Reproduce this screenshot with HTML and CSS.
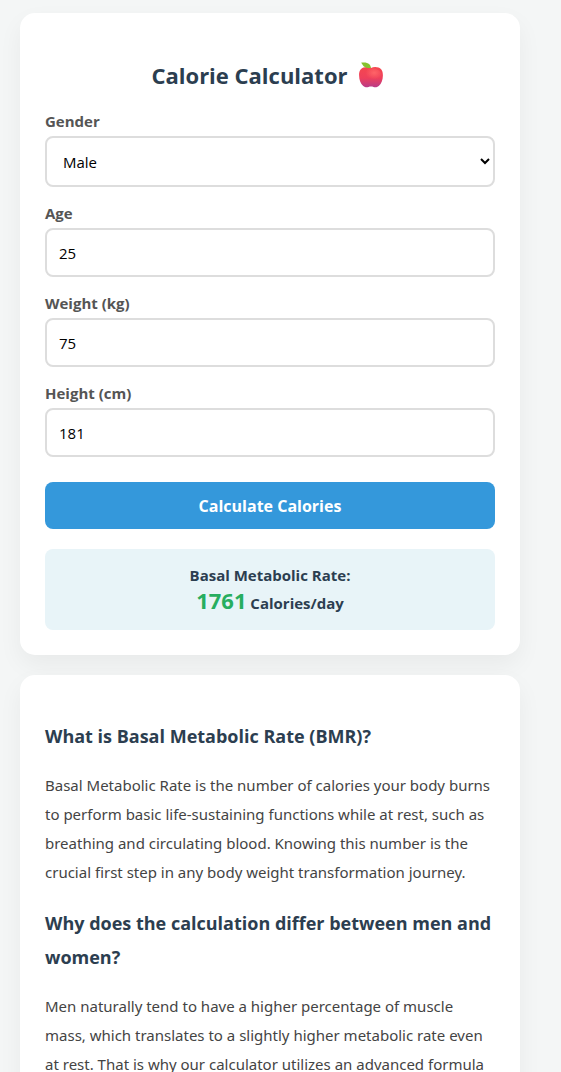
FILE: index.html
```html
<!DOCTYPE html>
<html lang="en">
<head>
    <meta charset="UTF-8">
    <meta name="viewport" content="width=device-width, initial-scale=1.0">
    <title>Calorie Calculator</title>
    <link rel="stylesheet" href="styles.css">
</head>
<body>
    <div class="card">
        <h2>
            Calorie Calculator
            <svg class="apple" viewBox="0 0 26 26" aria-hidden="true">
                <defs>
                    <linearGradient id="skin" x1="0" y1="0" x2="0" y2="1">
                        <stop offset="0" stop-color="#f5474f"/>
                        <stop offset="0.55" stop-color="#ee405c"/>
                        <stop offset="1" stop-color="#b83b88"/>
                    </linearGradient>
                    <radialGradient id="shine" cx="0.65" cy="0.3" r="0.4">
                        <stop offset="0" stop-color="#ff6468"/>
                        <stop offset="1" stop-color="#ff6468" stop-opacity="0"/>
                    </radialGradient>
                </defs>
                <path fill="url(#skin)" d="M13 6C15 5 18 4.700 20.500 5.600C23.800 6.700 25 9.800 24.900 13.500C24.800 18 23.500 21.800 20.800 24C19 25.400 16.800 25.400 15.500 24.900C13.800 24.400 12.200 24.400 10.500 24.900C9 25.400 7 25.400 5.200 24C2.500 21.800 1.200 18 1.100 13.500C1 9.800 2.200 6.700 5.500 5.600C8 4.700 11 5 13 6Z"/>
                <ellipse fill="url(#shine)" cx="13" cy="14" rx="11" ry="8"/>
                <path fill="#86c22e" d="M3 0.800C5.800 0.200 9.500 0.400 11.300 2.200C12.300 3.200 12.800 4.600 13 6C10.500 6.200 7.200 5.800 5.600 4.200C4.600 3.100 4.300 1.700 3 0.800Z"/>
            </svg>
        </h2>

        <label for="gender">Gender</label>
        <select id="gender">
            <option value="male" selected>Male</option>
            <option value="female">Female</option>
        </select>

        <label for="age">Age</label>
        <input type="number" id="age" value="25">

        <label for="weight">Weight (kg)</label>
        <input type="number" id="weight" value="75">

        <label for="height">Height (cm)</label>
        <input type="number" id="height" value="181">

        <button type="button" onclick="calculateBMR()">Calculate Calories</button>

        <div class="result">
            Basal Metabolic Rate:<br>
            <span class="calories" id="calories">1761</span> Calories/day
        </div>
    </div>

    <div class="card article">
        <h3>What is Basal Metabolic Rate (BMR)?</h3>
        <p>Basal Metabolic Rate is the number of calories your body burns to perform basic life-sustaining functions while at rest, such as breathing and circulating blood. Knowing this number is the crucial first step in any body weight transformation journey.</p>

        <h3>Why does the calculation differ between men and women?</h3>
        <p>Men naturally tend to have a higher percentage of muscle mass, which translates to a slightly higher metabolic rate even at rest. That is why our calculator utilizes an advanced formula</p>
    </div>

    <script>
        function calculateBMR() {
            const gender = document.getElementById('gender').value;
            const age = parseFloat(document.getElementById('age').value);
            const weight = parseFloat(document.getElementById('weight').value);
            const height = parseFloat(document.getElementById('height').value);

            if (!age || !weight || !height) {
                alert('Please fill in all fields!');
                return;
            }

            let bmr = 10 * weight + 6.25 * height - 5 * age;
            bmr += gender === 'male' ? 5 : -161;
            document.getElementById('calories').textContent = Math.round(bmr);
        }
    </script>
</body>
</html>
```

FILE: styles.css
```css
* {
    box-sizing: border-box;
}

body {
    font-family: 'Segoe UI', 'Open Sans', 'Noto Sans', sans-serif;
    font-size: 15px;
    background-color: #f4f6f6;
    margin: 0;
    padding: 13px 20px;
    color: #2c3e50;
}

.card {
    background: white;
    max-width: 500px;
    padding: 25px;
    margin-bottom: 20px;
    border-radius: 15px;
    box-shadow: 0 10px 25px rgba(0, 0, 0, 0.05);
}

h2 {
    display: flex;
    justify-content: center;
    align-items: center;
    gap: 10px;
    padding-right: 5px;
    font-size: 22px;
    line-height: 34px;
    margin: 20px 0 18px;
}

.apple {
    width: 26px;
    height: 26px;
}

label {
    display: block;
    line-height: 23px;
    margin-bottom: 3px;
    font-weight: bold;
    color: #555;
}

input, select {
    display: block;
    width: 100%;
    height: 49px;
    padding: 12px;
    margin-bottom: 15px;
    border: 2px solid #ddd;
    border-radius: 8px;
    background: white;
    color: black;
    font-family: inherit;
    font-size: 15px;
}

select {
    height: 51px;
}

input {
    appearance: textfield;
}

button {
    width: 100%;
    height: 47px;
    margin-top: 10px;
    border: none;
    border-radius: 8px;
    background-color: #3498db;
    color: white;
    font-family: inherit;
    font-size: 16px;
    font-weight: bold;
    cursor: pointer;
}

button:hover {
    background-color: #2980b9;
}

.result {
    margin-top: 20px;
    padding: 15px;
    border-radius: 8px;
    background: #e8f4f8;
    font-weight: bold;
    line-height: 22px;
    text-align: center;
}

.calories {
    color: #27ae60;
    font-size: 22px;
    line-height: 29px;
}

.article h3 {
    font-size: 18px;
    line-height: 34px;
    margin: 19px 0 18px;
}

.article p {
    font-family: 'Segoe UI', 'Noto Sans', sans-serif;
    line-height: 29px;
    margin: 15px 0;
    color: #444;
}
```
